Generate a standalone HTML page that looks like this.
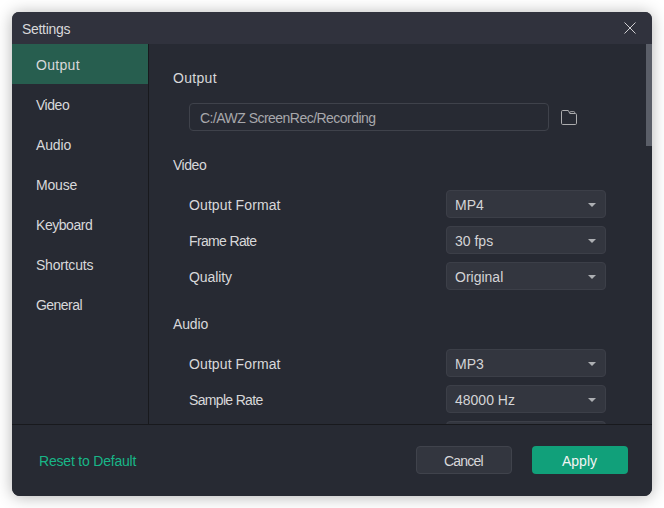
<!DOCTYPE html>
<html>
<head>
<meta charset="utf-8">
<style>
html,body{margin:0;padding:0;width:664px;height:508px;background:#ffffff;overflow:hidden;}
*{box-sizing:border-box;}
body{font-family:"Liberation Sans",sans-serif;font-size:14px;color:#d8d8da;}
.win{position:absolute;left:12px;top:12px;width:640px;height:484px;background:#272a33;border-radius:7px 7px 8px 8px;overflow:hidden;box-shadow:0 1px 16px rgba(0,0,0,0.30);}
.t{position:absolute;white-space:nowrap;line-height:16px;height:16px;}
.title{position:absolute;left:0;top:0;width:640px;height:32px;background:#30323d;}
.side-sep{position:absolute;left:136px;top:32px;width:1px;height:380px;background:#18191d;}
.foot-sep{position:absolute;left:0;top:412px;width:640px;height:1px;background:#18191d;}
.sel{position:absolute;left:0;top:32px;width:136px;height:40px;background:#275e4f;}
.scroll{position:absolute;left:634px;top:32px;width:6px;height:102px;background:#5a5e68;}
.inp{position:absolute;border:1px solid #3f424b;border-radius:4px;background:#272a33;}
.dd{position:absolute;width:160px;height:28px;border:1px solid #3c3f48;border-radius:4px;background:#33363f;}
.dd .v{position:absolute;left:8px;top:6px;line-height:16px;white-space:nowrap;color:#d4d4d6;}
.dd .a{position:absolute;left:141px;top:12px;width:0;height:0;border-left:4px solid transparent;border-right:4px solid transparent;border-top:4px solid #adafb3;}
.btn{position:absolute;width:96px;height:28px;border-radius:4px;}
</style>
</head>
<body>
<div class="win">
  <div class="title"></div>
  <div class="t" style="left:10px;top:9px;letter-spacing:-0.31px;">Settings</div>
  <svg style="position:absolute;left:612px;top:10px" width="12" height="12" viewBox="0 0 12 12"><path d="M0.5 0.5L11.5 11.5M11.5 0.5L0.5 11.5" stroke="#cfcfd2" stroke-width="1" fill="none"/></svg>

  <div class="sel"></div>
  <div class="t" style="left:24px;top:45px;letter-spacing:0.3px;">Output</div>
  <div class="t" style="left:24px;top:85px;letter-spacing:-0.47px;">Video</div>
  <div class="t" style="left:24px;top:125px;letter-spacing:-0.15px;">Audio</div>
  <div class="t" style="left:24px;top:165px;letter-spacing:-0.2px;">Mouse</div>
  <div class="t" style="left:24px;top:205px;letter-spacing:-0.45px;">Keyboard</div>
  <div class="t" style="left:24px;top:245px;letter-spacing:-0.22px;">Shortcuts</div>
  <div class="t" style="left:24px;top:285px;letter-spacing:-0.55px;">General</div>
  <div class="side-sep"></div>

  <div class="t" style="left:161px;top:58px;letter-spacing:0.3px;">Output</div>
  <div class="inp" style="left:177px;top:91px;width:360px;height:28px;"></div>
  <div class="t" style="left:188px;top:98px;color:#a7a8ac;letter-spacing:-0.53px;">C:/AWZ ScreenRec/Recording</div>
  <svg style="position:absolute;left:548px;top:97px" width="18" height="17" viewBox="0 0 18 17"><path d="M1.5 2.7Q1.5 1.5 2.7 1.5H8.3L9.8 4.5H15.3Q16.5 4.5 16.5 5.7V14.3Q16.5 15.5 15.3 15.5H2.7Q1.5 15.5 1.5 14.3Z" stroke="#acacae" stroke-width="1" fill="none" stroke-linejoin="round"/><rect x="9.8" y="2.6" width="4.9" height="1.9" rx="0.95" stroke="#acacae" stroke-width="0.9" fill="none"/></svg>

  <div class="t" style="left:161px;top:145px;letter-spacing:-0.47px;">Video</div>
  <div class="t" style="left:177px;top:185px;letter-spacing:0.1px;">Output Format</div>
  <div class="dd" style="left:434px;top:178px;"><span class="v">MP4</span><span class="a"></span></div>
  <div class="t" style="left:177px;top:221px;letter-spacing:-0.65px;">Frame Rate</div>
  <div class="dd" style="left:434px;top:214px;"><span class="v">30 fps</span><span class="a"></span></div>
  <div class="t" style="left:177px;top:257px;letter-spacing:-0.1px;">Quality</div>
  <div class="dd" style="left:434px;top:250px;"><span class="v">Original</span><span class="a"></span></div>

  <div class="t" style="left:161px;top:304px;letter-spacing:-0.15px;">Audio</div>
  <div class="t" style="left:177px;top:344px;letter-spacing:0.1px;">Output Format</div>
  <div class="dd" style="left:434px;top:337px;"><span class="v">MP3</span><span class="a"></span></div>
  <div class="t" style="left:177px;top:380px;letter-spacing:-0.67px;">Sample Rate</div>
  <div class="dd" style="left:434px;top:373px;"><span class="v">48000 Hz</span><span class="a"></span></div>
  <div class="dd" style="left:434px;top:409px;"></div>

  <div class="scroll"></div>

  <div style="position:absolute;left:0;top:412px;width:640px;height:72px;background:#272a33;"></div>
  <div class="foot-sep"></div>
  <div class="t" style="left:27px;top:441px;color:#18b688;letter-spacing:-0.2px;">Reset to Default</div>
  <div class="btn" style="left:404px;top:434px;background:#33363f;border:1px solid #40434c;"></div>
  <div class="t" style="left:432px;top:441px;letter-spacing:-0.8px;">Cancel</div>
  <div class="btn" style="left:520px;top:434px;background:#11a07a;"></div>
  <div class="t" style="left:550px;top:441px;color:#f4f4f4;">Apply</div>
</div>
</body>
</html>
